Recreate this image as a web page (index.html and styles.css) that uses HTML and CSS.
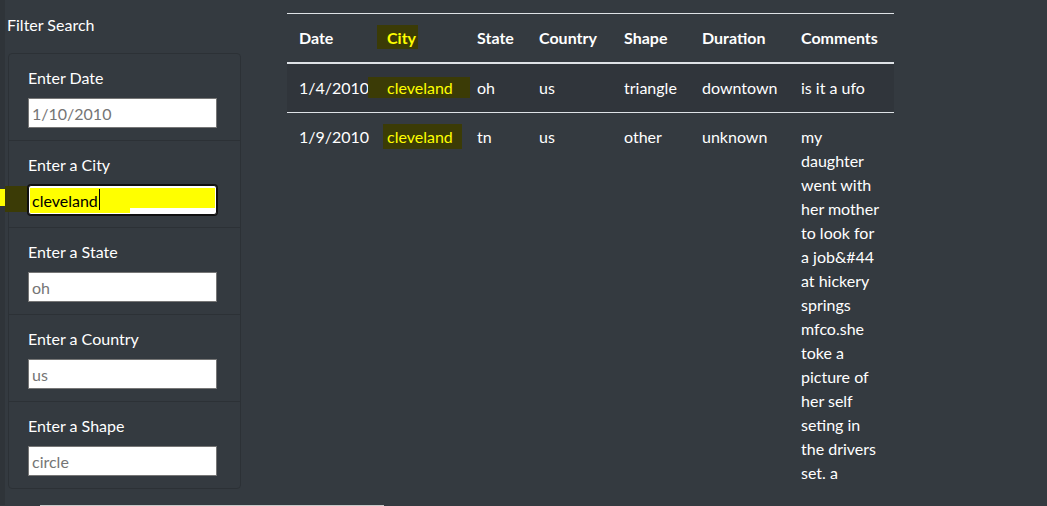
FILE: index.html
```html
<!DOCTYPE html>
<html lang="en">
<head>
<meta charset="utf-8">
<title>UFO Sightings</title>
<link rel="stylesheet" href="styles.css">
</head>
<body>
<div class="page">
  <aside class="sidebar">
    <h5 class="title">Filter Search</h5>
    <ul class="filters">
      <li class="filter">
        <label class="filter-label" for="datetime">Enter Date</label>
        <input class="filter-input" id="datetime" type="text" placeholder="1/10/2010">
      </li>
      <li class="filter">
        <label class="filter-label" for="city">Enter a City</label>
        <div class="field">
          <span class="marker-left"><span class="marker-tip"></span></span>
          <input class="filter-input is-focused" id="city" type="text" value="cleveland">
          <span class="caret"></span>
        </div>
      </li>
      <li class="filter">
        <label class="filter-label" for="state">Enter a State</label>
        <input class="filter-input" id="state" type="text" placeholder="oh">
      </li>
      <li class="filter">
        <label class="filter-label" for="country">Enter a Country</label>
        <input class="filter-input" id="country" type="text" placeholder="us">
      </li>
      <li class="filter">
        <label class="filter-label" for="shape">Enter a Shape</label>
        <input class="filter-input" id="shape" type="text" placeholder="circle">
      </li>
    </ul>
  </aside>
  <main class="results">
    <table class="ufo-table">
      <colgroup>
        <col class="c-date"><col class="c-city"><col class="c-state"><col class="c-country"><col class="c-shape"><col class="c-duration"><col class="c-comments">
      </colgroup>
      <thead>
        <tr>
          <th>Date</th>
          <th><span class="hl hl-head">City</span></th>
          <th>State</th>
          <th>Country</th>
          <th>Shape</th>
          <th>Duration</th>
          <th>Comments</th>
        </tr>
      </thead>
      <tbody>
        <tr class="striped">
          <td>1/4/2010</td>
          <td><span class="hl hl-row1">cleveland</span></td>
          <td>oh</td>
          <td>us</td>
          <td>triangle</td>
          <td>downtown</td>
          <td>is it a ufo</td>
        </tr>
        <tr>
          <td>1/9/2010</td>
          <td><span class="hl hl-row2">cleveland</span></td>
          <td>tn</td>
          <td>us</td>
          <td>other</td>
          <td>unknown</td>
          <td>my daughter went with her mother to look for a job&amp;#44 at hickery springs mfco.she toke a picture of her self seting in the drivers set. a</td>
        </tr>
      </tbody>
    </table>
  </main>
</div>
<div class="hscroll"><span class="hscroll-thumb"></span></div>
</body>
</html>
```
FILE: styles.css
```css
html, body {
  margin: 0;
  height: 506px;
  overflow: hidden;
}
body {
  background: #343a40;
  color: #ffffff;
  font-family: "Lato", "Noto Sans", sans-serif;
  font-size: 16px;
  line-height: 24px;
}
.page {
  display: flex;
  align-items: flex-start;
  border-left: 5px solid #2f3439;
  min-height: 506px;
  box-sizing: border-box;
}
.sidebar {
  width: 236px;
  flex: none;
}
.title {
  margin: 13px 0 16px 2px;
  font-size: 16px;
  font-weight: 400;
  line-height: 24px;
}
.filters {
  list-style: none;
  margin: 0 0 0 3px;
  padding: 0;
  width: 233px;
  box-sizing: border-box;
  border: 1px solid #2c3136;
  border-radius: 4px;
}
.filter {
  padding: 12px 20px 12px 19px;
  border-bottom: 1px solid #2c3136;
}
.filter:last-child {
  border-bottom: none;
}
.filter-label {
  display: block;
  margin-bottom: 8px;
  line-height: 24px;
}
.filter-input {
  display: block;
  box-sizing: border-box;
  width: 189px;
  height: 30px;
  margin: 0;
  padding: 0 3px;
  border: 1px solid #767676;
  border-radius: 0;
  background: #ffffff;
  color: #000000;
  font-family: "Lato", "Noto Sans", sans-serif;
  font-size: 16px;
}
.filter-input::placeholder {
  color: #757575;
  opacity: 1;
}
.field {
  position: relative;
}
.filter-input.is-focused {
  border: 1px solid #101010;
  border-radius: 3px;
  outline: none;
  box-shadow: 0 0 0 1px #101010, inset 0 0 0 1px #ffffff;
  background:
    linear-gradient(#ffff00, #ffff00) 1px 2px / 185px 20px no-repeat,
    linear-gradient(#ffff00, #ffff00) 1px 22px / 100px 6px no-repeat,
    #ffffff;
}
.marker-left {
  position: absolute;
  left: -23px;
  top: 1px;
  width: 22px;
  height: 26px;
  background: #3b3b06;
}
.marker-tip {
  position: absolute;
  left: -5px;
  top: 3px;
  width: 5px;
  height: 17px;
  background: #ffff00;
}
.caret {
  position: absolute;
  left: 71px;
  top: 4px;
  width: 1px;
  height: 21px;
  background: #000000;
}
.results {
  margin-left: 46px;
}
.ufo-table {
  margin-top: 13px;
  width: 607px;
  table-layout: fixed;
  border-collapse: collapse;
  color: #ffffff;
}
.c-date { width: 88px; }
.c-city { width: 90px; }
.c-state { width: 62px; }
.c-country { width: 85px; }
.c-shape { width: 78px; }
.c-duration { width: 99px; }
.c-comments { width: 105px; }
.ufo-table th,
.ufo-table td {
  padding: 12px;
  text-align: left;
  vertical-align: top;
  line-height: 24px;
}
.ufo-table th {
  font-weight: 700;
  border-top: 1px solid #dee2e6;
  border-bottom: 2px solid #dee2e6;
}
.ufo-table tbody tr {
  border-bottom: 1px solid #dee2e6;
}
.ufo-table tbody tr:last-child {
  border-bottom: none;
}
.striped td {
  background: #30353b;
}
.hl {
  color: #ffff00;
  background: #3b3b06;
}
.hl-head {
  padding: 3px 2px 2px 10px;
  margin-left: -10px;
}
.hl-row1 {
  padding: 1px 17px 1px 19px;
  margin-left: -19px;
}
.hl-row2 {
  padding: 3px 9px 3px 4px;
  margin-left: -4px;
}
.hscroll {
  position: fixed;
  left: 0;
  right: 0;
  bottom: 0;
  height: 1px;
  background: #343a40;
}
.hscroll-thumb {
  display: block;
  margin-left: 40px;
  width: 344px;
  height: 1px;
  background: #c8c8c8;
}
```
